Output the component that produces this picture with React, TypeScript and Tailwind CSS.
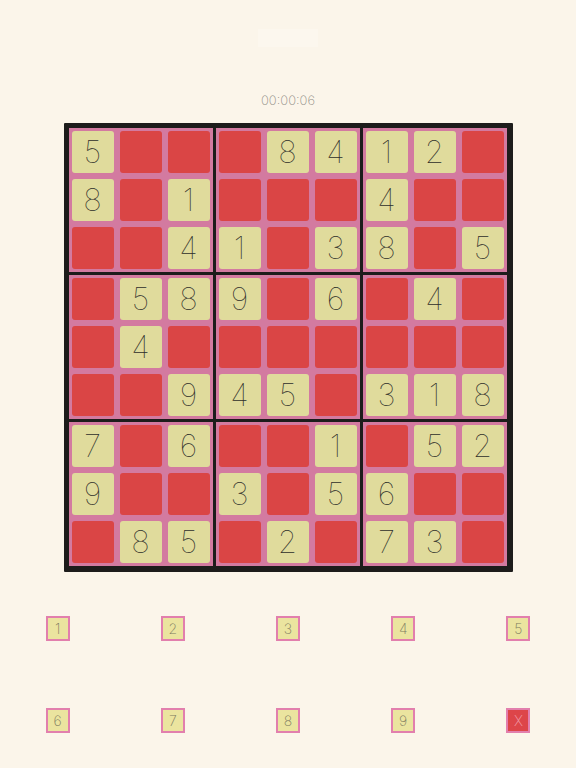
import React from 'react';

// puzzle rows, '0' is an empty (red) cell
const data = [
  '500084120',
  '801000400',
  '004103805',
  '058906040',
  '040000000',
  '009450318',
  '706001052',
  '900305600',
  '085020730',
];

function Cell({ value }: { value: string }) {
  const empty = value === '0';
  return (
    <div className="w-[48px] h-[48px] bg-[#d37aa0] p-[3px]">
      <div
        className={`w-full h-full rounded-[3px] flex items-center justify-center text-[31px] font-thin text-[#2e2e2a] ${
          empty ? 'bg-[#da4545]' : 'bg-[#e0db9c]'
        }`}
      >
        {empty ? '' : value}
      </div>
    </div>
  );
}

function Box({ br, bc }: { br: number; bc: number }) {
  const items = [];
  for (let r = 0; r < 3; r++) {
    for (let c = 0; c < 3; c++) {
      items.push(<Cell key={`${r}-${c}`} value={data[br * 3 + r][bc * 3 + c]} />);
    }
  }
  return <div className="grid grid-cols-3">{items}</div>;
}

function NumButton({ label, clear }: { label: string; clear?: boolean }) {
  return (
    <div className="flex justify-center">
      <div
        className={`w-[24px] h-[25px] border-2 border-[#e27fad] flex items-center justify-center text-[14px] font-extralight ${
          clear ? 'bg-[#dd4549] text-[#f09aa6]' : 'bg-[#ebe49f] text-[#7c7a60]'
        }`}
      >
        {label}
      </div>
    </div>
  );
}

export default function App() {
  const boxes = [];
  for (let br = 0; br < 3; br++) {
    for (let bc = 0; bc < 3; bc++) {
      boxes.push(<Box key={`${br}-${bc}`} br={br} bc={bc} />);
    }
  }
  return (
    <div
      className="w-[576px] h-[768px] bg-[#fbf5ea] flex flex-col items-center"
      style={{ fontFamily: 'Inter, "Liberation Sans", sans-serif' }}
    >
      <div className="mt-[29px] w-[60px] h-[18px] bg-[#fcf7ee]" />
      <div className="mt-[45px] h-[16px] leading-4 text-[13px] font-extralight text-[#8f8c85]">00:00:06</div>
      <div className="mt-[15px] bg-[#1d1c1b] p-[5px] pb-[6px] pr-[6px] rounded-[1px]">
        <div className="grid grid-cols-3 gap-[3px]">{boxes}</div>
      </div>
      <div className="w-full mt-[44px] grid grid-cols-5 gap-y-[67px]">
        {['1', '2', '3', '4', '5', '6', '7', '8', '9'].map((n) => (
          <NumButton key={n} label={n} />
        ))}
        <NumButton label="X" clear />
      </div>
    </div>
  );
}
